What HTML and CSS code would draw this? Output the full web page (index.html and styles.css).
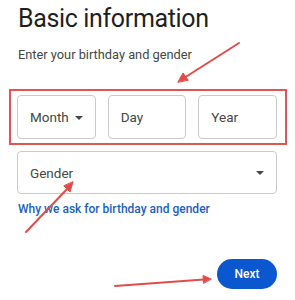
FILE: index.html
```html
<!DOCTYPE html>
<html>
<head>
<meta charset="utf-8">
<link rel="stylesheet" href="styles.css">
</head>
<body>
<div class="page">
  <h1 class="title">Basic information</h1>
  <p class="subtitle">Enter your birthday and gender</p>
  <div class="highlight">
    <div class="field select"><span>Month</span><span class="caret"></span></div>
    <div class="field"><span>Day</span></div>
    <div class="field"><span>Year</span></div>
  </div>
  <div class="field select gender"><span>Gender</span><span class="caret"></span></div>
  <a class="why">Why we ask for birthday and gender</a>
  <div class="actions"><button class="next">Next</button></div>
</div>
<svg class="arrows" width="295" height="300" viewBox="0 0 295 300">
  <g stroke="#e24b4b" stroke-width="2" stroke-linecap="round" fill="#e24b4b">
    <line x1="239" y1="43" x2="184" y2="78"/>
    <polygon points="178,82 183,73 188,80" stroke-width="1"/>
    <line x1="26" y1="232" x2="69" y2="187"/>
    <polygon points="73,182 70,192 64,186" stroke-width="1"/>
    <line x1="115" y1="286" x2="204" y2="279.5"/>
    <polygon points="211,279 203,275.5 203.5,283" stroke-width="1"/>
  </g>
</svg>
</body>
</html>
```
FILE: styles.css
```css
html, body {
  margin: 0;
  padding: 0;
  background: #ffffff;
}
body {
  width: 295px;
  height: 300px;
  overflow: hidden;
  position: relative;
  font-family: Roboto, "Noto Sans", Arial, sans-serif;
}
.page {
  display: flex;
  flex-direction: column;
  padding: 3px 0 0 18px;
}
.title {
  margin: 0;
  font-size: 25px;
  line-height: 31px;
  font-weight: 400;
  letter-spacing: -0.35px;
  color: #1f1f1f;
}
.subtitle {
  margin: 13px 0 0 0;
  font-size: 12.8px;
  line-height: 16px;
  color: #444746;
}
.highlight {
  margin: 26px 0 0 -9px;
  width: 278px;
  height: 56px;
  box-sizing: border-box;
  border: 2px solid #e25555;
  padding: 4px 8px 4px 6px;
  display: flex;
  gap: 12px;
}
.field {
  box-sizing: border-box;
  width: 79px;
  height: 44px;
  border: 1px solid #c8cacb;
  border-radius: 4px;
  display: flex;
  align-items: center;
  padding: 0 12px;
  font-size: 13.5px;
  color: #444746;
}
.field.select {
  justify-content: space-between;
}
.caret {
  width: 0;
  height: 0;
  border-left: 4.5px solid transparent;
  border-right: 4.5px solid transparent;
  border-top: 4.5px solid #444746;
  margin-top: 1px;
  margin-right: 0;
}
.gender {
  width: 260px;
  height: 43px;
  margin: 6px 0 0 -1px;
}
.why {
  margin: 8px 0 0 0;
  font-size: 12px;
  line-height: 14px;
  font-weight: 500;
  color: #1b5fc1;
  cursor: pointer;
}
.actions {
  display: flex;
  justify-content: flex-end;
  width: 259px;
  margin-top: 43px;
}
.next {
  width: 60px;
  height: 30px;
  border: none;
  border-radius: 15px;
  background: #0b57d0;
  color: #ffffff;
  font-family: Roboto, "Noto Sans", Arial, sans-serif;
  font-size: 12px;
  font-weight: 500;
  padding: 0;
}
.arrows {
  position: absolute;
  left: 0;
  top: 0;
  pointer-events: none;
}
```
